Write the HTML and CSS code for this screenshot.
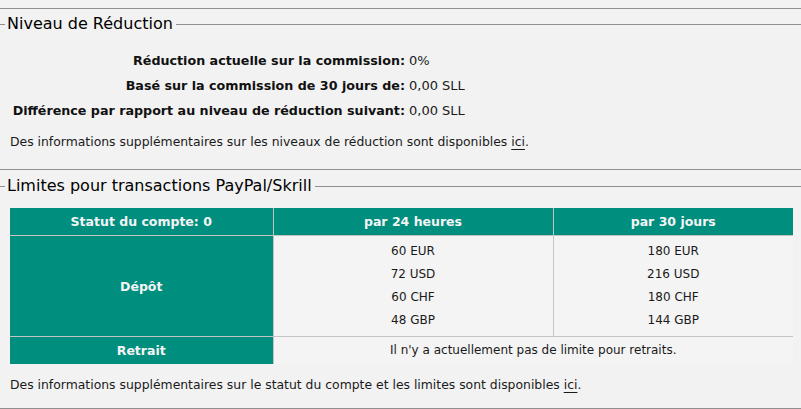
FILE: index.html
```html
<!DOCTYPE html>
<html lang="fr">
<head>
  <meta charset="UTF-8">
  <title>Niveau de Réduction</title>
  <link rel="stylesheet" href="styles.css">
</head>
<body>
  <div class="panel">
    <div class="legend"><span>Niveau de Réduction</span></div>
    <dl class="stats">
      <dt>Réduction actuelle sur la commission:</dt>
      <dd>0%</dd>
      <dt>Basé sur la commission de 30 jours de:</dt>
      <dd>0,00 SLL</dd>
      <dt>Différence par rapport au niveau de réduction suivant:</dt>
      <dd>0,00 SLL</dd>
    </dl>
    <p class="note">Des informations supplémentaires sur les niveaux de réduction sont disponibles <a href="#">ici</a>.</p>
  </div>

  <div class="panel panel-last">
    <div class="legend"><span>Limites pour transactions PayPal/Skrill</span></div>
    <table class="limits">
      <colgroup>
        <col class="col-status">
        <col class="col-day">
        <col>
      </colgroup>
      <tr>
        <th class="head">Statut du compte: 0</th>
        <th class="head">par 24 heures</th>
        <th class="head">par 30 jours</th>
      </tr>
      <tr>
        <th>Dépôt</th>
        <td class="amounts">
          <div>60&nbsp;EUR</div>
          <div>72&nbsp;USD</div>
          <div>60&nbsp;CHF</div>
          <div>48&nbsp;GBP</div>
        </td>
        <td class="amounts">
          <div>180&nbsp;EUR</div>
          <div>216&nbsp;USD</div>
          <div>180&nbsp;CHF</div>
          <div>144&nbsp;GBP</div>
        </td>
      </tr>
      <tr>
        <th class="head">Retrait</th>
        <td colspan="2" class="message">Il n'y a actuellement pas de limite pour retraits.</td>
      </tr>
    </table>
    <p class="note note-limits">Des informations supplémentaires sur le statut du compte et les limites sont disponibles <a href="#">ici</a>.</p>
  </div>
</body>
</html>
```

FILE: styles.css
```css
body {
  margin: 0;
  padding-top: 8px;
  background-color: #f2f2f2;
  color: #1a1a1a;
  font-family: 'DejaVu Sans', sans-serif;
}
.panel {
  border-top: 1px solid #8f8f8f;
  padding: 5px 0 17px;
}
.panel-last {
  border-bottom: 1px solid #8f8f8f;
  padding-top: 6px;
  padding-bottom: 13px;
}
.legend {
  display: flex;
  align-items: center;
  font-size: 16px;
  line-height: 20px;
  color: #000;
}
.legend::before {
  content: "";
  width: 5px;
  margin-right: 2px;
  border-top: 1px solid #8f8f8f;
}
.legend::after {
  content: "";
  flex: 1;
  margin-left: 3px;
  border-top: 1px solid #8f8f8f;
}
.stats {
  display: grid;
  grid-template-columns: 405px auto;
  column-gap: 4px;
  margin: 14px 0 0;
  font-size: 12.7px;
  line-height: 25px;
}
.stats dt {
  font-weight: bold;
  text-align: right;
  color: #111;
}
.stats dd {
  margin: 0;
  font-size: 13px;
}
.note {
  margin: 9px 0 0 10px;
  font-size: 12.4px;
  line-height: 20px;
}
.note-limits {
  margin-top: 11px;
}
.note a {
  color: inherit;
  text-decoration: underline;
  text-underline-offset: 3px;
}
.limits {
  width: 783px;
  margin: 12px 0 0 10px;
  border-collapse: collapse;
  border-style: hidden;
  table-layout: fixed;
  font-size: 12px;
}
.col-status {
  width: 263px;
}
.col-day {
  width: 280px;
}
.limits th,
.limits td {
  border: 1px solid #c4c4c4;
  text-align: center;
  padding: 0;
}
.limits th {
  background-color: #008e7f;
  color: #f4f4f4;
  font-size: 12.5px;
  font-weight: bold;
}
.limits th.head {
  padding: 5px 0;
  line-height: 17px;
}
.limits td {
  background-color: #f4f4f4;
}
.limits .amounts {
  padding: 4px 0;
  line-height: 23px;
}
.limits .message {
  padding: 5px 0;
  line-height: 17px;
}
```
